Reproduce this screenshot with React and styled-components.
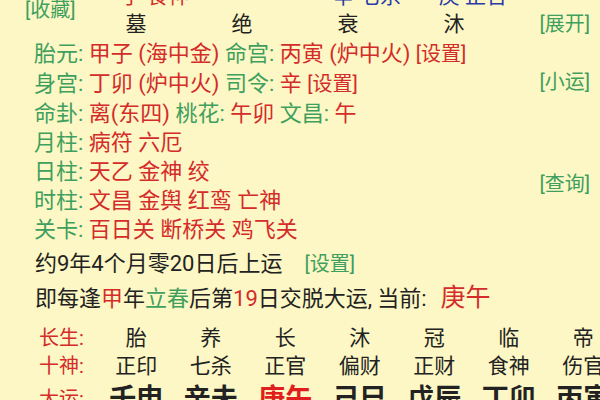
import React from "react";
import styled, { createGlobalStyle } from "styled-components";

const COLOR = {
  bg: "#fcf7c4",
  green: "#3f9f5e",
  red: "#d42b2b",
  blue: "#2b3aa8",
  ink: "#222222",
};

const GlobalStyle = createGlobalStyle`
  html, body {
    margin: 0;
    padding: 0;
    background: ${COLOR.bg};
  }
  body {
    font-family: Roboto, "Noto Sans CJK SC", sans-serif;
  }
`;

const Page = styled.div`
  width: 600px;
  height: 400px;
  overflow: hidden;
  background: ${COLOR.bg};
  color: ${COLOR.ink};
`;

const Header = styled.div`
  display: grid;
  grid-template-columns: 83px repeat(4, 106px) 1fr;
  grid-template-rows: 10px 29px;
`;

const CutText = styled.div`
  grid-row: 1;
  grid-column: ${(p) => p.$col};
  justify-self: end;
  align-self: end;
  margin-bottom: 3px;
  font-size: 21px;
  line-height: 21px;
  white-space: nowrap;
  color: ${(p) => (p.$blue ? COLOR.blue : COLOR.red)};
`;

const Collect = styled.div`
  grid-column: 1;
  grid-row: 1 / span 2;
  align-self: start;
  padding: 0 0 0 25px;
  font-size: 20px;
  line-height: 20px;
  color: ${COLOR.green};
`;

const Pillar = styled.div`
  grid-row: 2;
  text-align: center;
  font-size: 21px;
  line-height: 29px;
`;

const Expand = styled.div`
  grid-column: 6;
  grid-row: 2;
  justify-self: end;
  padding-right: 10px;
  font-size: 20px;
  line-height: 29px;
  color: ${COLOR.green};
`;

const Info = styled.div`
  display: flex;
  padding: 0 10px 0 34px;
`;

const InfoLeft = styled.div`
  flex: 1;
  display: flex;
  flex-direction: column;
`;

const InfoRight = styled.div`
  display: flex;
  flex-direction: column;
  align-items: flex-end;
`;

const Row = styled.div`
  font-size: 22px;
  line-height: 29px;
  white-space: nowrap;
`;

const Label = styled.span`
  color: ${COLOR.green};
`;

const Value = styled.span`
  color: ${COLOR.red};
`;

const Setting = styled.span`
  color: ${(p) => (p.$green ? COLOR.green : COLOR.red)};
  font-size: 20px;
  margin-left: ${(p) => p.$gap || 0}px;
`;

const SideLink = styled.div`
  margin-top: ${(p) => p.$top}px;
  font-size: 20px;
  line-height: 29px;
  color: ${COLOR.green};
`;

const Notes = styled.div`
  margin-top: 3px;
  padding-left: 35px;
`;

const NoteRow = styled.div`
  font-size: 22px;
  line-height: 33px;
  white-space: nowrap;
`;

const Mark = styled.span`
  color: ${(p) => (p.$green ? COLOR.green : COLOR.red)};
  font-size: ${(p) => (p.$big ? "25px" : "inherit")};
  margin-left: ${(p) => p.$gap || 0}px;
`;

const Punct = styled.span`
  margin-right: ${(p) => p.$space}px;
`;

const Table = styled.div`
  display: grid;
  grid-template-columns: 60px repeat(7, 74.5px);
  grid-template-rows: 28px 28px 38px;
  margin-top: 9px;
  padding-left: 39px;
`;

const RowLabel = styled.div`
  color: ${COLOR.red};
  font-size: 20px;
  line-height: ${(p) => (p.$tall ? "38px" : "28px")};
  white-space: nowrap;
`;

const Cell = styled.div`
  text-align: center;
  white-space: nowrap;
  font-size: ${(p) => (p.$big ? "27px" : "21px")};
  font-weight: ${(p) => (p.$big ? 700 : 400)};
  line-height: ${(p) => (p.$big ? "38px" : "28px")};
  color: ${(p) => (p.$red ? "#e01e1e" : COLOR.ink)};
`;

const pillars = ["墓", "绝", "衰", "沐"];

const infoRows = [
  [
    ["胎元: ", "甲子 (海中金) "],
    ["命宫: ", "丙寅 (炉中火) "],
  ],
  [
    ["身宫: ", "丁卯 (炉中火) "],
    ["司令: ", "辛 "],
  ],
  [
    ["命卦: ", "离(东四) "],
    ["桃花: ", "午卯 "],
    ["文昌: ", "午"],
  ],
  [["月柱: ", "病符 六厄"]],
  [["日柱: ", "天乙 金神 绞"]],
  [["时柱: ", "文昌 金舆 红鸾 亡神"]],
  [["关卡: ", "百日关 断桥关 鸡飞关"]],
];

const stages = ["胎", "养", "长", "沐", "冠", "临", "帝"];
const gods = ["正印", "七杀", "正官", "偏财", "正财", "食神", "伤官"];
const luck = ["壬申", "辛未", "庚午", "己巳", "戊辰", "丁卯", "丙寅"];

function App() {
  return (
    <Page>
      <GlobalStyle />
      <Header>
        <Collect>[收藏]</Collect>
        <CutText $col={2}>子 食神</CutText>
        <CutText $col={4} $blue>
          辛 七杀
        </CutText>
        <CutText $col={5} $blue>
          庚 正官
        </CutText>
        {pillars.map((p) => (
          <Pillar key={p}>{p}</Pillar>
        ))}
        <Expand>[展开]</Expand>
      </Header>

      <Info>
        <InfoLeft>
          {infoRows.map((parts, i) => (
            <Row key={i}>
              {parts.map(([label, value]) => (
                <React.Fragment key={label}>
                  <Label>{label}</Label>
                  <Value>{value}</Value>
                </React.Fragment>
              ))}
              {i < 2 && <Setting>[设置]</Setting>}
            </Row>
          ))}
        </InfoLeft>
        <InfoRight>
          <SideLink $top={29}>[小运]</SideLink>
          <SideLink $top={73}>[查询]</SideLink>
        </InfoRight>
      </Info>

      <Notes>
        <NoteRow>
          约9年4个月零20日后上运
          <Setting $green $gap={22}>
            [设置]
          </Setting>
        </NoteRow>
        <NoteRow>
          即每逢<Mark>甲</Mark>年<Mark $green>立春</Mark>后第<Mark>19</Mark>
          日交脱大运<Punct $space={5}>,</Punct>当前:
          <Mark $big $gap={14}>
            庚午
          </Mark>
        </NoteRow>
      </Notes>

      <Table>
        <RowLabel>长生:</RowLabel>
        {stages.map((s) => (
          <Cell key={s}>{s}</Cell>
        ))}
        <RowLabel>十神:</RowLabel>
        {gods.map((g, i) => (
          <Cell key={i}>{g}</Cell>
        ))}
        <RowLabel $tall>大运:</RowLabel>
        {luck.map((l) => (
          <Cell key={l} $big $red={l === "庚午"}>
            {l}
          </Cell>
        ))}
      </Table>
    </Page>
  );
}

export default App;
